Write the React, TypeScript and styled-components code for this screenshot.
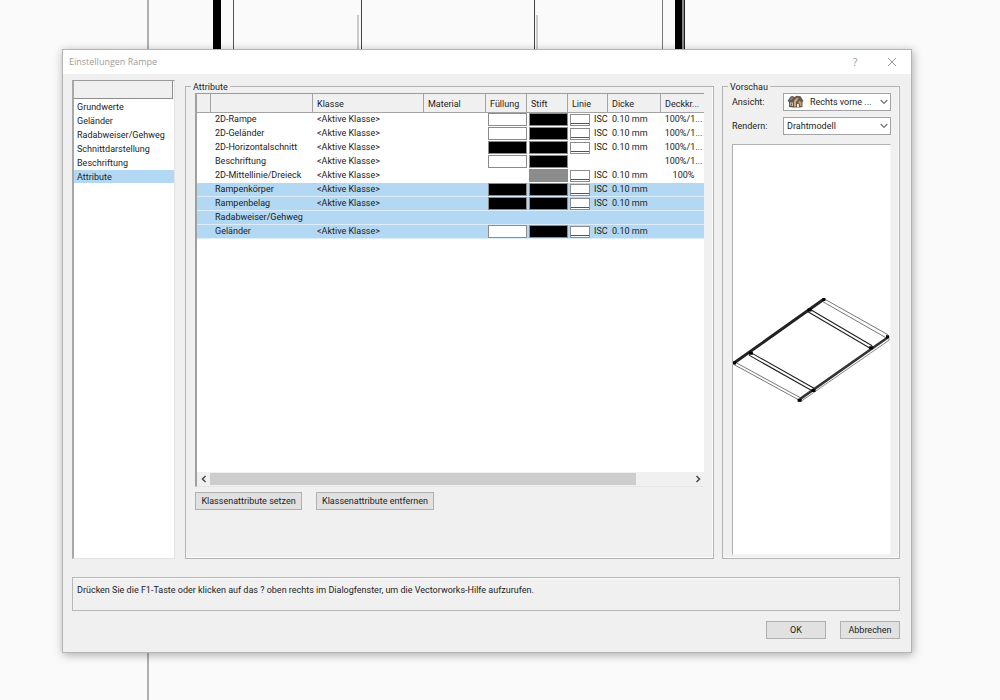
import React from "react";
import styled, { createGlobalStyle } from "styled-components";

const GlobalStyle = createGlobalStyle`
  * { box-sizing: border-box; }
  body {
    margin: 0;
    background: #fafafa;
    color: #1c1c1c;
    font: 9px/14px Roboto, "Liberation Sans", Arial, sans-serif;
  }
  button, select { font: inherit; color: inherit; }
`;

const Desktop = styled.div`
  position: relative;
  display: flex;
  min-height: 100vh;
  padding: 49px 88px 47px 62px;
`;

const PlanLines = styled.svg`
  position: absolute;
  inset: 0;
  width: 100%;
  height: 100%;
`;

const Dialog = styled.section`
  position: relative;
  flex: 1;
  min-width: 0;
  display: flex;
  flex-direction: column;
  border: 1px solid #b4b4b4;
  background: #f0f0f0;
  box-shadow: 1px 2px 9px rgba(0, 0, 0, 0.32);
`;

const TitleBar = styled.header`
  display: flex;
  align-items: center;
  height: 24px;
  padding: 0 13px 0 6px;
  background: #fff;
  color: #9c9c9c;
  font-family: "Open Sans", sans-serif;
`;

const Title = styled.h1`
  flex: 1;
  margin: 0;
  font-size: 9px;
  font-weight: 400;
`;

const TitleButton = styled.button`
  display: flex;
  align-items: center;
  justify-content: center;
  width: 12px;
  height: 14px;
  margin-left: 25px;
  padding: 0;
  border: 0;
  background: none;
  font-size: 11px;
`;

const Content = styled.div`
  flex: 1;
  display: flex;
  flex-direction: column;
  padding: 6px 11px 13px 9px;
`;

const Columns = styled.div`
  flex: 1;
  display: flex;
`;

const Sidebar = styled.nav`
  width: 103px;
  margin-right: 10px;
  border: 1px solid #e4e4e4;
  border-top-color: #9a9a9a;
  border-left: 2px solid #a8a8a8;
  background: #fff;
`;

const SidebarHead = styled.div`
  height: 18px;
  margin: 0 1px 1px 0;
  border-right: 1px solid #8c8c8c;
  border-bottom: 1px solid #8c8c8c;
  background: #f0f0f0;
`;

const SidebarLink = styled.a<{ $active?: boolean }>`
  display: block;
  height: 14px;
  padding-left: 3px;
  border-bottom: 1px solid transparent;
  background: ${(p) => (p.$active ? "#b3d8f3" : "none")};
  background-clip: padding-box;
  color: inherit;
  text-decoration: none;
  white-space: nowrap;
`;

const Group = styled.fieldset`
  min-width: 0;
  margin: 0;
  border: 1px solid #b4b4b4;
  box-shadow: inset -1px -1px 0 #fafafa;
`;

const AttributeGroup = styled(Group)`
  flex: 1;
  margin-right: 8px;
  padding: 0 9px;
`;

const PreviewGroup = styled(Group)`
  display: flex;
  flex-direction: column;
  width: 178px;
  padding: 0 8px 3px 9px;
`;

const Legend = styled.legend`
  margin-left: -4px;
  padding: 2px 2px 0;
  line-height: 11px;
`;

const ListFrame = styled.div`
  display: flex;
  flex-direction: column;
  height: 394px;
  border-top: 1px solid #9a9a9a;
  border-bottom: 1px solid #e6e6e6;
  border-left: 2px solid #a0a0a0;
  background: #fff;
`;

const TableArea = styled.div`
  flex: 1;
  overflow: hidden;
`;

const Table = styled.table`
  width: 100%;
  table-layout: fixed;
  border-collapse: separate;
  border-spacing: 0;
`;

const Col = styled.col<{ $width?: number }>`
  width: ${(p) => (p.$width ? `${p.$width}px` : "auto")};
`;

const HeadCell = styled.th`
  height: 19px;
  padding: 2px 0 0 4px;
  overflow: hidden;
  border-right: 1px solid #a4a4a4;
  border-bottom: 1px solid #a4a4a4;
  background: #f0f0f0;
  font-weight: 400;
  text-align: left;
  white-space: nowrap;
  &:last-child { border-right: 0; }
`;

const Row = styled.tr<{ $selected?: boolean }>`
  background: ${(p) => (p.$selected ? "#b3d8f3" : "#fff")};
  --row-line: ${(p) => (p.$selected ? "#dceefb" : "#fff")};
`;

const Cell = styled.td<{ $center?: boolean }>`
  height: 14px;
  padding: 0 0 0 ${(p) => (p.$center ? 2 : 4)}px;
  border-bottom: 1px solid var(--row-line);
  line-height: 13px;
  text-align: ${(p) => (p.$center ? "center" : "left")};
  white-space: nowrap;
`;

const SwatchCell = styled(Cell)`
  padding: 0 0 0 2px;
`;

const Swatch = styled.span<{ $color: string }>`
  display: block;
  height: 13px;
  border: 1px solid #8c8c8c;
  background: ${(p) => p.$color};
`;

const LineSample = styled.span`
  display: flex;
  align-items: center;
  gap: 4px;
  height: 13px;
`;

const LineBox = styled.span`
  flex: none;
  width: 20px;
  height: 12px;
  border: 1px solid #8c8c8c;
  background: linear-gradient(#555, #555) 0 8px / 100% 1px no-repeat #fff;
`;

const ScrollBar = styled.div`
  display: flex;
  align-items: center;
  height: 14px;
  background: #f0f0f0;
`;

const ScrollButton = styled.button`
  display: flex;
  align-items: center;
  justify-content: center;
  width: 13px;
  height: 12px;
  padding: 0;
  border: 0;
  background: none;
`;

const ScrollTrack = styled.div`
  flex: 1;
  height: 12px;
`;

const ScrollThumb = styled.div`
  width: 88.5%;
  height: 100%;
  background: #cdcdcd;
`;

const ButtonRow = styled.div<{ $end?: boolean }>`
  display: flex;
  gap: 14px;
  justify-content: ${(p) => (p.$end ? "flex-end" : "flex-start")};
  margin-top: ${(p) => (p.$end ? 10 : 5)}px;
`;

const PushButton = styled.button<{ $width: number }>`
  width: ${(p) => p.$width}px;
  height: 18px;
  padding: 0;
  border: 1px solid #b0b0b0;
  background: #e1e1e1;
  line-height: 14px;
  white-space: nowrap;
`;

const Field = styled.div`
  display: flex;
  align-items: center;
  margin-bottom: 6px;
`;

const FieldLabel = styled.label`
  width: 51px;
`;

const SelectBox = styled.div`
  position: relative;
  flex: 1;
  height: 18px;
`;

const Select = styled.select<{ $icon?: boolean }>`
  display: block;
  width: 100%;
  height: 18px;
  padding: 0 14px 0 ${(p) => (p.$icon ? 26 : 3)}px;
  appearance: none;
  border: 1px solid #a4a4a4;
  border-radius: 0;
  background: #fff;
`;

const Chevron = styled.svg`
  position: absolute;
  top: 6px;
  right: 3px;
  pointer-events: none;
`;

const HouseIcon = styled.svg`
  position: absolute;
  top: 2px;
  left: 4px;
  pointer-events: none;
`;

const Preview = styled.div`
  flex: 1;
  display: flex;
  align-items: center;
  margin-top: 3px;
  border: 1px solid #f6f6f6;
  border-top-color: #b0b0b0;
  border-left-color: #b0b0b0;
  background: #fff;
`;

const HelpBox = styled.p`
  height: 34px;
  margin: 18px 0 0;
  padding: 5px 4px;
  border: 1px solid #b8b8b8;
  box-shadow: inset 0 1px 0 #fafafa;
`;

const pages = ["Grundwerte", "Geländer", "Radabweiser/Gehweg", "Schnittdarstellung", "Beschriftung", "Attribute"];

const columns: { title: string; width?: number }[] = [
  { title: "", width: 14 },
  { title: "", width: 102 },
  { title: "Klasse" },
  { title: "Material", width: 62 },
  { title: "Füllung", width: 41 },
  { title: "Stift", width: 41 },
  { title: "Linie", width: 40 },
  { title: "Dicke", width: 53 },
  { title: "Deckkr...", width: 43 },
];

interface Attribute {
  name: string;
  plain?: boolean;
  fill?: string;
  pen?: string;
  line?: boolean;
  opacity?: string;
  selected?: boolean;
}

const attributes: Attribute[] = [
  { name: "2D-Rampe", fill: "#fff", pen: "#000", line: true, opacity: "100%/1..." },
  { name: "2D-Geländer", fill: "#fff", pen: "#000", line: true, opacity: "100%/1..." },
  { name: "2D-Horizontalschnitt", fill: "#000", pen: "#000", line: true, opacity: "100%/1..." },
  { name: "Beschriftung", fill: "#fff", pen: "#000", opacity: "100%/1..." },
  { name: "2D-Mittellinie/Dreieck", pen: "#8c8c8c", line: true, opacity: "100%" },
  { name: "Rampenkörper", fill: "#000", pen: "#000", line: true, selected: true },
  { name: "Rampenbelag", fill: "#000", pen: "#000", line: true, selected: true },
  { name: "Radabweiser/Gehweg", plain: true, selected: true },
  { name: "Geländer", fill: "#fff", pen: "#000", line: true, selected: true },
];

function SelectChevron() {
  return (
    <Chevron width="8" height="6" viewBox="0 0 8 6" fill="none" stroke="#707070" strokeWidth="1.2">
      <path d="M.7 1 4 4.3 7.3 1" />
    </Chevron>
  );
}

function RampDrawing() {
  return (
    <svg width="100%" viewBox="0 0 158 106" fill="none" role="img" aria-label="Rampe">
      <g stroke="#555" strokeWidth=".8">
        <path d="M92 2 156 38M90 4.500 154 41M1 68 67 104M2 65.500 68 101.500" />
      </g>
      <g stroke="#222" strokeWidth="1.1">
        <path d="M77 12 140 49M75 14.500 138 51.500M18 56 82 92M16 58.500 80 94.500" />
      </g>
      <path d="M1 66.500 91 2.500" stroke="#222" strokeWidth="3" />
      <path d="M67 103 156 40.500" stroke="#333" strokeWidth="2.600" />
      <path d="M67 106 157 43.500V39M67 106V101" stroke="#888" strokeWidth="1" />
      <path d="M0 66.500h3M90 2.500h3M75 13h4M16 56.500h4M154 40h3M137 51h4M79 94h4M65 104h4" stroke="#000" strokeWidth="3" />
    </svg>
  );
}

export default function App() {
  return (
    <>
      <GlobalStyle />
      <Desktop>
        <PlanLines aria-hidden="true">
          <rect x="147" width="2" height="100%" fill="#b0b0b0" />
          <rect x="213" width="8" height="60" fill="#000" />
          <rect x="233" width="1" height="60" fill="#555" />
          <rect x="357" y="15" width="2" height="45" fill="#ccc" />
          <rect x="361" width="1" height="60" fill="#444" />
          <rect x="534" width="1" height="60" fill="#444" />
          <rect x="536" y="15" width="2" height="45" fill="#ccc" />
          <rect x="662" width="1" height="60" fill="#777" />
          <rect x="675" width="7" height="60" fill="#000" />
          <rect x="682" width="2" height="60" fill="#888" />
          <rect x="684" width="1" height="60" fill="#222" />
        </PlanLines>
        <Dialog role="dialog" aria-labelledby="dialog-title">
          <TitleBar>
            <Title id="dialog-title">Einstellungen Rampe</Title>
            <TitleButton aria-label="Hilfe">?</TitleButton>
            <TitleButton aria-label="Schließen">
              <svg width="10" height="10" viewBox="0 0 10 10" stroke="#9c9c9c" strokeWidth="1">
                <path d="M1 1 9 9M9 1 1 9" />
              </svg>
            </TitleButton>
          </TitleBar>
          <Content>
            <Columns>
              <Sidebar>
                <SidebarHead />
                {pages.map((page) => (
                  <SidebarLink key={page} href="#" $active={page === "Attribute"}>
                    {page}
                  </SidebarLink>
                ))}
              </Sidebar>
              <AttributeGroup>
                <Legend>Attribute</Legend>
                <ListFrame>
                  <TableArea>
                    <Table>
                      <colgroup>
                        {columns.map((c, i) => (
                          <Col key={i} $width={c.width} />
                        ))}
                      </colgroup>
                      <thead>
                        <tr>
                          {columns.map((c, i) => (
                            <HeadCell key={i}>{c.title}</HeadCell>
                          ))}
                        </tr>
                      </thead>
                      <tbody>
                        {attributes.map((a) => (
                          <Row key={a.name} $selected={a.selected}>
                            <Cell />
                            <Cell>{a.name}</Cell>
                            <Cell>{a.plain ? "" : "<Aktive Klasse>"}</Cell>
                            <Cell />
                            <SwatchCell>{a.fill && <Swatch $color={a.fill} />}</SwatchCell>
                            <SwatchCell>{a.pen && <Swatch $color={a.pen} />}</SwatchCell>
                            <SwatchCell>
                              {a.line && (
                                <LineSample>
                                  <LineBox />
                                  ISC
                                </LineSample>
                              )}
                            </SwatchCell>
                            <Cell>{a.line ? "0.10 mm" : ""}</Cell>
                            <Cell $center>{a.opacity}</Cell>
                          </Row>
                        ))}
                      </tbody>
                    </Table>
                  </TableArea>
                  <ScrollBar>
                    <ScrollButton aria-label="Nach links">
                      <svg width="6" height="8" viewBox="0 0 6 8" fill="none" stroke="#505050" strokeWidth="1.6">
                        <path d="M4.500 1 1.500 4l3 3" />
                      </svg>
                    </ScrollButton>
                    <ScrollTrack>
                      <ScrollThumb />
                    </ScrollTrack>
                    <ScrollButton aria-label="Nach rechts">
                      <svg width="6" height="8" viewBox="0 0 6 8" fill="none" stroke="#505050" strokeWidth="1.6">
                        <path d="M1.500 1l3 3-3 3" />
                      </svg>
                    </ScrollButton>
                  </ScrollBar>
                </ListFrame>
                <ButtonRow>
                  <PushButton $width={107}>Klassenattribute setzen</PushButton>
                  <PushButton $width={118}>Klassenattribute entfernen</PushButton>
                </ButtonRow>
              </AttributeGroup>
              <PreviewGroup>
                <Legend>Vorschau</Legend>
                <Field>
                  <FieldLabel htmlFor="view">Ansicht:</FieldLabel>
                  <SelectBox>
                    <Select id="view" $icon>
                      <option>Rechts vorne ...</option>
                    </Select>
                    <HouseIcon width="17" height="13" viewBox="0 0 17 13">
                      <path d="M.5 6 3.500 1.500 6 1l1 1 3-1.200 3.500.4 3 4.800-1 1v5l-3 .6H6L2 12V7z" fill="#625c58" />
                      <path d="M7 6 10 2.500l1.500 1L9 7v4.500H7z" fill="#d9a766" />
                      <path d="M12 5.500 14.500 7.500V11H13V8.500h-2z" fill="#c99a62" />
                      <path d="M3 7.500h3V11l-3-.5z" fill="#c4c0bb" />
                      <path d="M4 8.500h1v2H4z" fill="#555" />
                      <path d="M10 9h2v3h-2z" fill="#e8e2da" />
                      <path d="M2.500 5 4.500 2.500h2L4.500 5z" fill="#8d8680" />
                    </HouseIcon>
                    <SelectChevron />
                  </SelectBox>
                </Field>
                <Field>
                  <FieldLabel htmlFor="render">Rendern:</FieldLabel>
                  <SelectBox>
                    <Select id="render">
                      <option>Drahtmodell</option>
                    </Select>
                    <SelectChevron />
                  </SelectBox>
                </Field>
                <Preview>
                  <RampDrawing />
                </Preview>
              </PreviewGroup>
            </Columns>
            <HelpBox>
              Drücken Sie die F1-Taste oder klicken auf das ? oben rechts im Dialogfenster, um die Vectorworks-Hilfe
              aufzurufen.
            </HelpBox>
            <ButtonRow $end>
              <PushButton $width={60}>OK</PushButton>
              <PushButton $width={60}>Abbrechen</PushButton>
            </ButtonRow>
          </Content>
        </Dialog>
      </Desktop>
    </>
  );
}
